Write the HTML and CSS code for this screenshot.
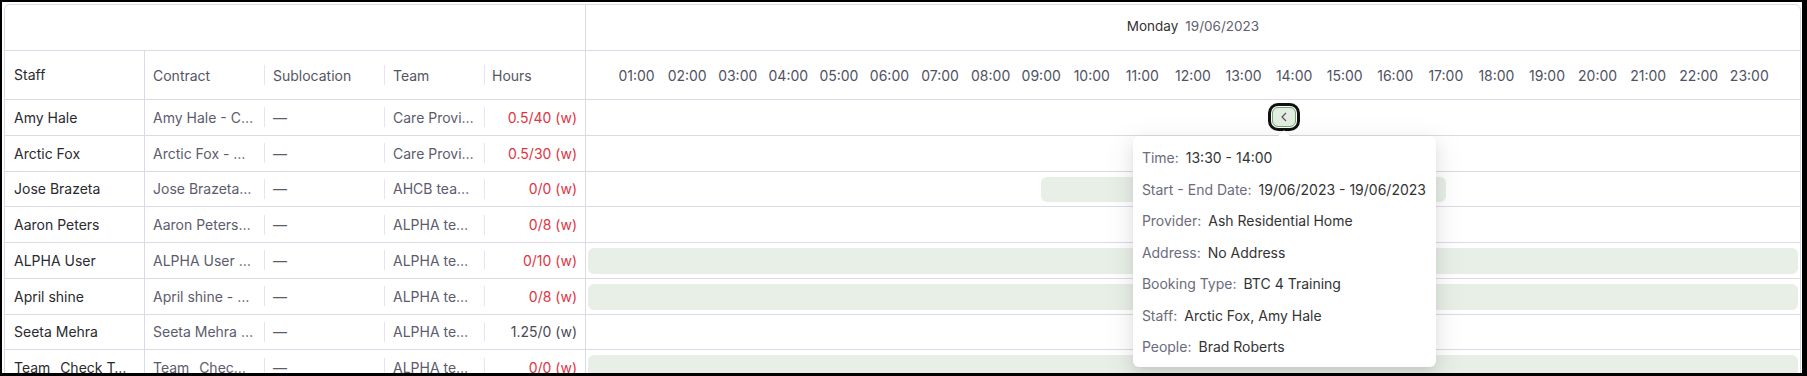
FILE: index.html
```html
<!DOCTYPE html>
<html>
<head>
<meta charset="UTF-8">
<title>Rota - Day view</title>
<link rel="stylesheet" href="styles.css">
</head>
<body>
<div class="frame">
	<div class="board">
		<!-- linha do dia -->
		<div class="head-top">
			<div class="head-blank"></div>
			<div class="head-day"><span class="day">Monday</span><span class="date">19/06/2023</span></div>
		</div>
		<!-- cabecalho das colunas -->
		<div class="row head-cols">
			<div class="cell staff">Staff</div>
			<div class="cell sep">Contract</div>
			<div class="cell sep">Sublocation</div>
			<div class="cell sep">Team</div>
			<div class="cell hours">Hours</div>
			<div class="hour-labels">
				<span>01:00</span><span>02:00</span><span>03:00</span><span>04:00</span><span>05:00</span><span>06:00</span>
				<span>07:00</span><span>08:00</span><span>09:00</span><span>10:00</span><span>11:00</span><span>12:00</span>
				<span>13:00</span><span>14:00</span><span>15:00</span><span>16:00</span><span>17:00</span><span>18:00</span>
				<span>19:00</span><span>20:00</span><span>21:00</span><span>22:00</span><span>23:00</span>
			</div>
		</div>

		<div class="row">
			<div class="cell staff">Amy Hale</div>
			<div class="cell sep muted">Amy Hale - C…</div>
			<div class="cell sep muted">—</div>
			<div class="cell sep muted">Care Provi…</div>
			<div class="cell hours over">0.5/40 (w)</div>
			<div class="track">
				<button class="slot-btn" style="left: 56.25%;">
					<svg width="6" height="10" viewBox="0 0 6 10"><path d="M5 1 L1 5 L5 9" fill="none" stroke="#555" stroke-width="1.2"/></svg>
					<div class="popover">
						<div class="pop-line"><span class="lbl">Time:</span><span class="val">13:30 - 14:00</span></div>
						<div class="pop-line"><span class="lbl">Start - End Date:</span><span class="val">19/06/2023 - 19/06/2023</span></div>
						<div class="pop-line"><span class="lbl">Provider:</span><span class="val">Ash Residential Home</span></div>
						<div class="pop-line"><span class="lbl">Address:</span><span class="val">No Address</span></div>
						<div class="pop-line"><span class="lbl">Booking Type:</span><span class="val">BTC 4 Training</span></div>
						<div class="pop-line"><span class="lbl">Staff:</span><span class="val">Arctic Fox, Amy Hale</span></div>
						<div class="pop-line"><span class="lbl">People:</span><span class="val">Brad Roberts</span></div>
					</div>
				</button>
			</div>
		</div>
		<div class="row">
			<div class="cell staff">Arctic Fox</div>
			<div class="cell sep muted">Arctic Fox - …</div>
			<div class="cell sep muted">—</div>
			<div class="cell sep muted">Care Provi…</div>
			<div class="cell hours over">0.5/30 (w)</div>
			<div class="track"></div>
		</div>
		<div class="row">
			<div class="cell staff">Jose Brazeta</div>
			<div class="cell sep muted">Jose Brazeta…</div>
			<div class="cell sep muted">—</div>
			<div class="cell sep muted">AHCB tea…</div>
			<div class="cell hours over">0/0 (w)</div>
			<div class="track"><div class="bar" style="left: 37.5%; width: 33.333%;"></div></div>
		</div>
		<div class="row">
			<div class="cell staff">Aaron Peters</div>
			<div class="cell sep muted">Aaron Peters…</div>
			<div class="cell sep muted">—</div>
			<div class="cell sep muted">ALPHA te…</div>
			<div class="cell hours over">0/8 (w)</div>
			<div class="track"></div>
		</div>
		<div class="row">
			<div class="cell staff">ALPHA User</div>
			<div class="cell sep muted">ALPHA User …</div>
			<div class="cell sep muted">—</div>
			<div class="cell sep muted">ALPHA te…</div>
			<div class="cell hours over">0/10 (w)</div>
			<div class="track"><div class="bar full"></div></div>
		</div>
		<div class="row">
			<div class="cell staff">April shine</div>
			<div class="cell sep muted">April shine - …</div>
			<div class="cell sep muted">—</div>
			<div class="cell sep muted">ALPHA te…</div>
			<div class="cell hours over">0/8 (w)</div>
			<div class="track"><div class="bar full"></div></div>
		</div>
		<div class="row">
			<div class="cell staff">Seeta Mehra</div>
			<div class="cell sep muted">Seeta Mehra …</div>
			<div class="cell sep muted">—</div>
			<div class="cell sep muted">ALPHA te…</div>
			<div class="cell hours">1.25/0 (w)</div>
			<div class="track"></div>
		</div>
		<div class="row">
			<div class="cell staff">Team _Check T…</div>
			<div class="cell sep muted">Team _Chec…</div>
			<div class="cell sep muted">—</div>
			<div class="cell sep muted">ALPHA te…</div>
			<div class="cell hours over">0/0 (w)</div>
			<div class="track"><div class="bar full"></div></div>
		</div>
	</div>
</div>
</body>
</html>
```

FILE: styles.css
```css
* {
	margin: 0;
	padding: 0;
	box-sizing: border-box;
}
body {
	font-family: Inter, "Noto Sans", sans-serif;
	font-size: 14px;
	color: #2a2a2e;
	background: #fff;
}
.frame {
	width: 1807px;
	height: 376px;
	border: solid #000;
	border-width: 2px 5px 3px 2px;
	padding: 2px 1px 0 2px;
	overflow: hidden;
}
.board {
	border: 1px solid #dcdae6;
	border-radius: 6px;
	height: 420px;
}

/* cabecalho */
.head-top {
	display: grid;
	grid-template-columns: 581px 1fr;
	height: 46px;
	border-bottom: 1px solid #dcdae6;
}
.head-blank {
	border-right: 1px solid #dcdae6;
}
.head-day {
	display: flex;
	align-items: center;
	justify-content: center;
	gap: 7px;
	padding-bottom: 4px;
	font-size: 13.5px;
}
.head-day .day {
	color: #333;
}
.head-day .date {
	color: #5e5e6c;
}

/* linhas */
.row {
	display: grid;
	grid-template-columns: 140px 120px 120px 100px 101px 1fr;
	height: 35.75px;
	border-bottom: 1px solid #dcdae6;
}
.head-cols {
	height: 49px;
}
.cell {
	position: relative;
	display: flex;
	align-items: center;
	padding: 0 8px;
	white-space: nowrap;
	overflow: hidden;
	text-overflow: ellipsis;
}
.cell.staff {
	padding-left: 9px;
	border-right: 1px solid #dcdae6;
}
.cell.sep::after {
	content: "";
	position: absolute;
	right: 0;
	top: 50%;
	height: 20px;
	margin-top: -10px;
	width: 1px;
	background: #e6e4ee;
}
.cell.muted {
	color: #5c5c6c;
}
.cell.hours {
	justify-content: flex-end;
	padding-right: 8px;
	border-right: 1px solid #dcdae6;
	color: #4a4a58;
}
.cell.over {
	color: #e1343f;
}
.head-cols .cell {
	color: #555562;
}
.head-cols .cell.staff {
	color: #2a2a2e;
	padding-bottom: 2px;
}
.head-cols .cell.hours {
	justify-content: flex-start;
	padding-left: 7px;
}
.hour-labels {
	display: flex;
	align-items: center;
	padding: 0 25.3px;
	color: #4f5262;
}
.hour-labels span {
	flex: 1;
	text-align: center;
}

/* linha do tempo */
.track {
	position: relative;
}
.bar {
	position: absolute;
	top: 5px;
	bottom: 4px;
	background: #e8efe7;
	border-radius: 6px;
}
.bar.full {
	left: 2px;
	right: 2px;
}
.slot-btn {
	position: absolute;
	top: 7px;
	width: 24px;
	height: 20px;
	margin-left: 3px;
	display: flex;
	align-items: center;
	justify-content: center;
	background: #e3ede2;
	border: 1px solid #6ea86c;
	border-radius: 6px;
	box-shadow: 0 0 0 1px #fff, 0 0 0 4px #111;
	cursor: pointer;
	font: inherit;
}
.popover {
	position: absolute;
	z-index: 10;
	top: calc(100% + 10px);
	left: 50%;
	width: 303px;
	margin-left: -151px;
	padding: 11px 9px 9px;
	display: flex;
	flex-direction: column;
	gap: 9.5px;
	background: #fff;
	border-radius: 6px;
	text-align: left;
	cursor: default;
	box-shadow: 0 6px 16px rgba(0, 0, 0, 0.08), 0 3px 6px -4px rgba(0, 0, 0, 0.12), 0 9px 28px 8px rgba(0, 0, 0, 0.05);
}
.popover::before {
	content: "";
	position: absolute;
	top: -4px;
	left: 50%;
	width: 8px;
	height: 8px;
	margin-left: -4px;
	background: #fff;
	transform: rotate(45deg);
	box-shadow: -2px -2px 4px rgba(0, 0, 0, 0.05);
}
.pop-line {
	line-height: 22px;
	white-space: nowrap;
	color: #333;
}
.pop-line .lbl {
	color: #6c6c7c;
	margin-right: 7px;
}
```
